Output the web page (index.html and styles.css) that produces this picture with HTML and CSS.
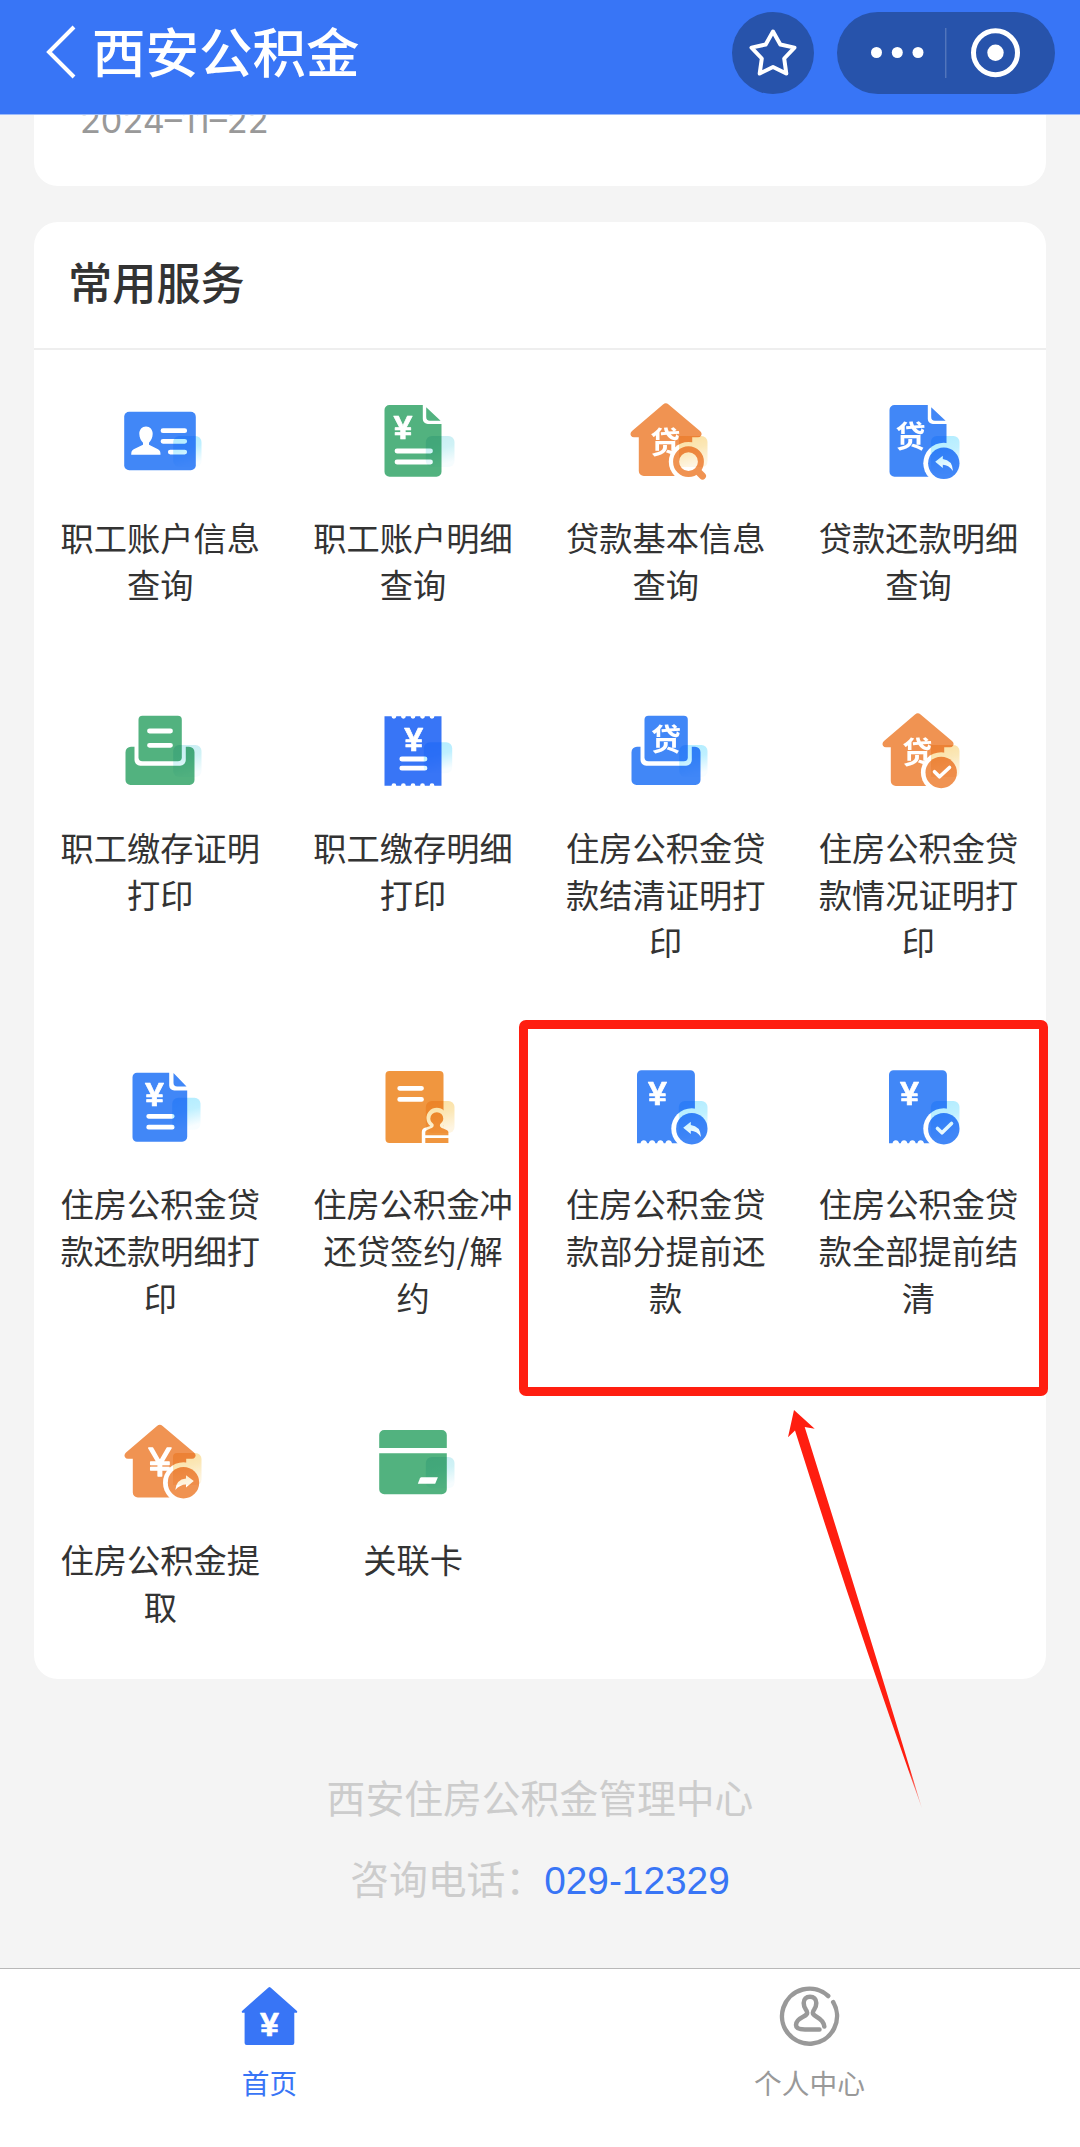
FILE: index.html
```html
<!DOCTYPE html>
<html lang="zh-CN">
<head>
    <meta charset="UTF-8">
    <meta name="viewport" content="width=device-width, initial-scale=1.0">
    <title>西安公积金</title>
    <link rel="stylesheet" href="styles.css">
</head>
<body>
    <!-- Shared icon parts -->
    <svg class="sprite" width="0" height="0">
        <defs>
            <linearGradient id="cyan" x1="0" y1="0" x2="0.25" y2="1">
                <stop offset="0" stop-color="#b0ecff"/>
                <stop offset="0.5" stop-color="#bff0ff"/>
                <stop offset="1" stop-color="#f8fdff"/>
            </linearGradient>
            <linearGradient id="mint" x1="0" y1="0" x2="0.25" y2="1">
                <stop offset="0" stop-color="#c8edf2"/>
                <stop offset="0.5" stop-color="#d0f2f6"/>
                <stop offset="1" stop-color="#f6fcfe"/>
            </linearGradient>
            <linearGradient id="sand" x1="0" y1="0" x2="0.25" y2="1">
                <stop offset="0" stop-color="#fbdf9f"/>
                <stop offset="0.5" stop-color="#fbe7b6"/>
                <stop offset="1" stop-color="#fef5e2"/>
            </linearGradient>
            <g id="page">
                <path d="M21.5 6H54.8V20a5 5 0 0 0 5 5H73.5V72.7a5 5 0 0 1-5 5H21.5a5 5 0 0 1-5-5V11a5 5 0 0 1 5-5z"/>
                <path d="M58.2 8.2 72.6 21.7H62a3.8 3.8 0 0 1-3.8-3.8z"/>
            </g>
            <path id="house" d="M42 5.4q2.8-2.2 5.6 0L79 32q2.600 2.500 1 4.700-1 1.600-3 1.600H71.200V72a5 5 0 0 1-5 5H22.800a5 5 0 0 1-5-5V38.300H13q-2 0-3-1.600-1.400-2.200 1-4.700z"/>
            <g id="tray">
                <rect x="23.500" y="6.700" width="43.300" height="45.600" rx="4"/>
                <path d="M19.500 37.700V51a5.700 5.700 0 0 0 5.700 5.700H65.100a5.700 5.700 0 0 0 5.700-5.700V37.700h3.200a5.500 5.500 0 0 1 5.500 5.500V71a5 5 0 0 1-5 5H15.500a5 5 0 0 1-5-5V43.200a5.500 5.500 0 0 1 5.500-5.500z"/>
            </g>
            <path id="stub" d="M20.500 5.300H69.400a4.500 4.500 0 0 1 4.500 4.500V78.300H51a3.400 4 0 0 0-6.600 0h-1.700a3.400 4 0 0 0-6.600 0h-1.700a3.400 4 0 0 0-6.600 0h-1.700a3.400 4 0 0 0-6.600 0H16V9.800a4.500 4.500 0 0 1 4.500-4.500z"/>
            <path id="back" d="M62.200 62.700 69.800 56.700V60Q79.300 61 80 72 75.500 65.800 69.800 65.800V69z"/>
        </defs>
    </svg>

    <!-- Navbar -->
    <header class="navbar">
        <svg class="back" viewBox="0 0 32 54" width="32" height="54"><path d="M29 2 4 27 29 52"/></svg>
        <h1 class="brand">西安公积金</h1>
        <div class="round-btn">
            <svg viewBox="0 0 82 82" width="82" height="82"><path class="star" d="M41 19.500 48.300 32.500 62.500 35.600 52.200 46.500 54.300 61.500 41 55 27.700 61.500 29.800 46.500 19.500 35.600 33.700 32.500z"/></svg>
        </div>
        <div class="capsule">
            <svg viewBox="0 0 218 82" width="218" height="82">
                <circle cx="39.500" cy="40.500" r="5.500"/>
                <circle cx="60.300" cy="40.500" r="5.500"/>
                <circle cx="81" cy="40.500" r="5.500"/>
                <path class="sep" d="M108.800 16V66"/>
                <circle class="ring" cx="158.500" cy="40.700" r="22"/>
                <circle cx="158.500" cy="40.700" r="8.200"/>
            </svg>
        </div>
    </header>

    <main class="content">
        <section class="card notice">
            <p class="date">2024–11–22</p>
        </section>

        <section class="card services">
            <h2 class="card-title">常用服务</h2>
            <div class="grid">
                <a class="item">
                    <svg class="icon blue" viewBox="0 0 90 84">
                        <rect x="9.200" y="12.700" width="71.600" height="58.600" rx="5"/>
                        <path class="white" d="M31 27.500c4 0 6.700 3.200 6.700 7.300 0 4-1.800 7-3.700 9v2l9 4.400c2 1.200 2.500 2.300 2.500 5.500H16.200c0-3.200.500-4.300 2.500-5.500l9.300-4.400v-2c-2-2-3.700-5-3.700-9 0-4.100 2.700-7.300 6.700-7.300z"/>
                        <path class="line" d="M48 31.700H69.700M48 42.300H69.700M55.300 53.100H69.700"/>
                        <rect class="shade" x="58.200" y="37" width="28.300" height="31" rx="6" fill="url(#cyan)"/>
                    </svg>
                    <span>职工账户信息查询</span>
                </a>
                <a class="item">
                    <svg class="icon green" viewBox="0 0 90 84">
                        <use href="#page"/>
                        <text class="yen" x="34.900" y="39.600">¥</text>
                        <path class="line" d="M29 52H62.500M29 63H62.500"/>
                        <rect class="shade" x="57.800" y="37" width="28.700" height="31" rx="6" fill="url(#mint)"/>
                    </svg>
                    <span>职工账户明细查询</span>
                </a>
                <a class="item">
                    <svg class="icon orange" viewBox="0 0 90 84">
                        <use href="#house"/>
                        <text class="loan" x="44.300" y="53.500">贷</text>
                        <circle class="white" cx="67.500" cy="62.700" r="19.700"/>
                        <circle class="lens" cx="67.500" cy="62.700" r="12.400"/>
                        <path class="handle" d="M78 73.500 81.500 77"/>
                        <path class="shade" d="M58 37H80.500a6 6 0 0 1 6 6V62q0 6-6 6H58z" fill="url(#sand)"/>
                    </svg>
                    <span>贷款基本信息查询</span>
                </a>
                <a class="item">
                    <svg class="icon blue" viewBox="0 0 90 84">
                        <use href="#page"/>
                        <text class="loan" x="37.600" y="47.500">贷</text>
                        <circle class="white" cx="70.800" cy="64.300" r="20.500"/>
                        <circle cx="70.800" cy="64.300" r="15.700"/>
                        <use class="white" href="#back"/>
                        <rect class="shade" x="57.800" y="37" width="28.700" height="38" rx="6" fill="url(#cyan)"/>
                    </svg>
                    <span>贷款还款明细查询</span>
                </a>

                <a class="item">
                    <svg class="icon green" viewBox="0 0 90 84">
                        <use href="#tray"/>
                        <path class="line" d="M34.500 22H55.500M34.500 36.300H55.500"/>
                        <rect class="shade" x="58.200" y="36" width="28.300" height="32" rx="6" fill="url(#mint)"/>
                    </svg>
                    <span>职工缴存证明打印</span>
                </a>
                <a class="item">
                    <svg class="icon royal" viewBox="0 0 90 84">
                        <path d="M16.500 7.300h7a2.400 2.400 0 0 0 4.800 0h4.700a2.400 2.400 0 0 0 4.800 0h4.800a2.400 2.400 0 0 0 4.800 0h4.700a2.400 2.400 0 0 0 4.800 0h4.700a2.400 2.400 0 0 0 4.800 0h7.100V76.700h-7.100a2.400 2.400 0 0 0-4.800 0h-4.700a2.400 2.400 0 0 0-4.800 0h-4.700a2.400 2.400 0 0 0-4.800 0h-4.800a2.400 2.400 0 0 0-4.800 0h-4.700a2.400 2.400 0 0 0-4.800 0h-7z"/>
                        <text class="yen" x="45.800" y="42">¥</text>
                        <path class="line" d="M33.800 50H57M33.800 59.200H57"/>
                        <rect class="shade" x="55.800" y="33.300" width="28.400" height="31" rx="6" fill="url(#cyan)"/>
                    </svg>
                    <span>职工缴存明细打印</span>
                </a>
                <a class="item">
                    <svg class="icon blue" viewBox="0 0 90 84">
                        <use href="#tray"/>
                        <text class="loan" x="44.900" y="40.800">贷</text>
                        <rect class="shade" x="58.200" y="36" width="28.300" height="32" rx="6" fill="url(#cyan)"/>
                    </svg>
                    <span>住房公积金贷款结清证明打印</span>
                </a>
                <a class="item">
                    <svg class="icon orange" viewBox="0 0 90 84">
                        <use href="#house"/>
                        <text class="loan" x="44.300" y="53.500">贷</text>
                        <circle class="white" cx="68.200" cy="63.500" r="20.300"/>
                        <circle cx="68.200" cy="63.500" r="15.700"/>
                        <path class="shade" d="M58 36H80.500a6 6 0 0 1 6 6V62q0 6-6 6H58z" fill="url(#sand)"/>
                        <path class="tick" d="M61.500 62.700 66.500 67.800 76.500 58.500"/>
                    </svg>
                    <span>住房公积金贷款情况证明打印</span>
                </a>

                <a class="item">
                    <svg class="icon blue" viewBox="0 0 90 84">
                        <path d="M22 7.700H54.200V20.500a5 5 0 0 0 5 5H72.200V71.700a5 5 0 0 1-5 5H22a4.500 4.500 0 0 1-4.500-4.500V12.200a4.500 4.500 0 0 1 4.500-4.500z"/>
                        <path d="M58.500 8 71.500 21.500H62.300a3.800 3.800 0 0 1-3.800-3.800z"/>
                        <text class="yen" x="39.500" y="41">¥</text>
                        <path class="line" d="M33.700 51.300H57.200M33.700 62.200H57.200"/>
                        <rect class="shade" x="57.200" y="32.700" width="28.300" height="32" rx="6" fill="url(#cyan)"/>
                    </svg>
                    <span>住房公积金贷款还款明细打印</span>
                </a>
                <a class="item">
                    <svg class="icon amber" viewBox="0 0 90 84">
                        <rect x="17.500" y="6" width="58" height="72" rx="4"/>
                        <path class="line" d="M31.700 23.300H53.500M31.700 34.400H53.500"/>
                        <path class="white" d="M53.800 78.500V67q0-4 4-4.500l4.500-1.500a10.300 10.300 0 1 1 13 0l5 3V78.500z"/>
                        <path d="M68.800 47.200a6.500 6.500 0 0 1 6.500 6.500c0 2.600-2 4-3.200 5.500-.8 2.500 1 3.600 3.200 4.400l3.300 1.400c1.200.500 1.800 1.200 1.800 2.500v2.800H57.300v-2.800c0-1.300.6-2 1.800-2.500l3.300-1.400c2.200-.8 3.900-2 3.100-4.400-1.200-1.500-3.200-2.900-3.200-5.500a6.500 6.500 0 0 1 6.500-6.500zM57.300 73H80.400v5H57.300z"/>
                        <rect class="shade" x="57.800" y="36" width="28.700" height="32" rx="6" fill="url(#sand)"/>
                    </svg>
                    <span>住房公积金冲还贷签约/解约</span>
                </a>
                <a class="item">
                    <svg class="icon blue" viewBox="0 0 90 84">
                        <use href="#stub"/>
                        <text class="yen" x="36.400" y="40">¥</text>
                        <circle class="white" cx="70.800" cy="63.700" r="20.500"/>
                        <circle cx="70.800" cy="63.700" r="15.700"/>
                        <use class="white" href="#back"/>
                        <rect class="shade" x="57.800" y="36" width="28.700" height="38" rx="6" fill="url(#cyan)"/>
                    </svg>
                    <span>住房公积金贷款部分提前还款</span>
                </a>
                <a class="item">
                    <svg class="icon blue" viewBox="0 0 90 84">
                        <use href="#stub"/>
                        <text class="yen" x="36.400" y="40">¥</text>
                        <circle class="white" cx="70.800" cy="63.700" r="20.500"/>
                        <circle cx="70.800" cy="63.700" r="15.700"/>
                        <path class="tick" d="M64.500 63.500 69 67.800 78.500 58.500"/>
                        <rect class="shade" x="57.800" y="36" width="28.700" height="38" rx="6" fill="url(#cyan)"/>
                    </svg>
                    <span>住房公积金贷款全部提前结清</span>
                </a>

                <a class="item">
                    <svg class="icon orange" viewBox="0 0 90 84">
                        <use href="#house" y="-0.500"/>
                        <text class="yen yen-lg" x="44.900" y="54.500">¥</text>
                        <circle class="white" cx="68.500" cy="61.700" r="20.500"/>
                        <circle cx="68.500" cy="61.700" r="15.700"/>
                        <path class="white" d="M78.800 60 71 54.300V57.500Q61 58.500 60.300 69 65 63.500 71 63.500V66.500z"/>
                        <path class="shade" d="M58 38.300V36q0-4 4-4H80.500a6 6 0 0 1 6 6V58q0 6-6 6H58z" fill="url(#sand)"/>
                    </svg>
                    <span>住房公积金提取</span>
                </a>
                <a class="item">
                    <svg class="icon green" viewBox="0 0 90 84">
                        <path d="M16.200 9H73.800a5 5 0 0 1 5 5V27H11.200V14a5 5 0 0 1 5-5zM11.200 32.300H78.800V68.300a5 5 0 0 1-5 5H16.200a5 5 0 0 1-5-5z"/>
                        <rect class="shade" x="57.800" y="36" width="28.700" height="31.300" rx="6" fill="url(#mint)"/>
                        <path class="white" d="M53.500 56.300H69.900L67.200 62.800H49.800L52 57.300Q52.400 56.300 53.500 56.300z"/>
                    </svg>
                    <span>关联卡</span>
                </a>
            </div>

            <!-- Highlighted entries -->
            <div class="highlight"></div>
            <svg class="pointer" viewBox="0 0 140 402" width="140" height="402">
                <defs>
                    <linearGradient id="tail" gradientUnits="userSpaceOnUse" x1="0" y1="0" x2="0" y2="402">
                        <stop offset="0.9" stop-color="#ff1e10"/>
                        <stop offset="1" stop-color="#ff1e10" stop-opacity="0.2"/>
                    </linearGradient>
                </defs>
                <path fill="url(#tail)" d="M8 2 28.700 20.700 18.700 19Q76 202 136 400.500 70 216 9 22.600L2 29.300z"/>
            </svg>
        </section>

        <footer class="footer">
            <p>西安住房公积金管理中心</p>
            <p>咨询电话：<a class="phone">029-12329</a></p>
        </footer>
    </main>

    <!-- Tab bar -->
    <nav class="tabbar">
        <a class="tab active">
            <svg viewBox="0 0 64 64" width="64" height="64">
                <path d="M32.500 2.500q-1-1-2 0L4 26q-.8 1.800 1 1.800h1.600V58q0 2 2 2H54.300q2 0 2-2V27.800H58q1.800 0 1-1.800z"/>
                <text class="yen" x="31.500" y="50.500">¥</text>
            </svg>
            <span>首页</span>
        </a>
        <a class="tab">
            <svg viewBox="0 0 64 64" width="64" height="64">
                <path class="outline" d="M50.200 11A27.500 27.500 0 1 0 55.200 17.200M41.500 44.500H27c-6 0-9-1-9-4.500 0-7 8-7.500 10.500-10.500 1.500-2 .500-3.500-.800-5.200-1.500-2.300-2-4.300-2-6.300 0-4 2.500-6.200 6.300-6.200s6.300 2.200 6.300 6.200c0 2-.500 4-2 6.300-1.300 1.700-2.300 3.200-.800 5.200 2.500 3 10 3.800 10.800 12"/>
            </svg>
            <span>个人中心</span>
        </a>
    </nav>
</body>
</html>
```
FILE: styles.css
```css
* {
    margin: 0;
    padding: 0;
    box-sizing: border-box;
}

body {
    width: 1080px;
    height: 2147px;
    display: flex;
    flex-direction: column;
    background: #f4f4f4;
    color: #333333;
    font-family: 'Noto Sans CJK SC', sans-serif;
    overflow: hidden;
}

.sprite {
    display: block;
    height: 0;
}

/* Navbar */
.navbar {
    height: 115px;
    flex: none;
    display: flex;
    align-items: flex-start;
    padding: 12px 25px 0 45px;
    background: #3875f6;
    border-bottom: 1px solid #9bbafa;
}

.back {
    margin-top: 13px;
    fill: none;
    stroke: #ffffff;
    stroke-width: 4;
}

.brand {
    flex: 1;
    margin-left: 15px;
    font-size: 53.5px;
    font-weight: 500;
    line-height: 75px;
    color: #ffffff;
}

.round-btn,
.capsule {
    height: 82px;
    border-radius: 41px;
    background: #2753ab;
    fill: #ffffff;
}

.round-btn {
    width: 82px;
    margin-right: 23px;
}

.capsule {
    width: 218px;
}

.star {
    fill: none;
    stroke: #ffffff;
    stroke-width: 4;
    stroke-linejoin: round;
}

.sep {
    stroke: #6585c4;
    stroke-width: 1;
}

.ring {
    fill: none;
    stroke: #ffffff;
    stroke-width: 5;
}

/* Cards */
.content {
    flex: 1;
    padding: 0 34px;
}

.card {
    background: #ffffff;
    border-radius: 24px;
}

.notice {
    height: 71px;
    padding-left: 46px;
    border-radius: 0 0 24px 24px;
    overflow: hidden;
}

.date {
    margin-top: -14px;
    font-family: 'Inter', sans-serif;
    font-size: 34.2px;
    font-weight: 400;
    line-height: 40px;
    color: #999999;
}

.services {
    position: relative;
    height: 1457px;
    margin-top: 36px;
}

.card-title {
    height: 128px;
    padding-left: 34px;
    border-bottom: 2px solid #eeeeee;
    font-size: 44.2px;
    font-weight: 500;
    line-height: 119px;
}

/* Service grid */
.grid {
    display: grid;
    grid-template-columns: repeat(4, 252.7px);
    grid-template-rows: 310px 356px 356px 307px;
}

.item {
    display: flex;
    flex-direction: column;
    align-items: center;
    padding: 49px 24px 0;
    font-size: 33.25px;
    line-height: 47px;
    text-align: center;
}

.icon {
    width: 90px;
    height: 84px;
    flex: none;
    margin-bottom: 30px;
    isolation: isolate;
}

.blue { fill: #4187f7; }
.royal { fill: #3875f6; }
.green { fill: #52b27f; }
.orange { fill: #f09352; }
.amber { fill: #f0963f; }
.white { fill: #ffffff; }

.line {
    stroke: #ffffff;
    stroke-width: 4.8;
    stroke-linecap: round;
}

.tick {
    fill: none;
    stroke: #ffffff;
    stroke-width: 3.6;
    stroke-linecap: round;
    stroke-linejoin: round;
}

.shade {
    mix-blend-mode: multiply;
}

.lens {
    fill: none;
    stroke: #f09352;
    stroke-width: 6;
}

.handle {
    stroke: #f09352;
    stroke-width: 7;
    stroke-linecap: round;
}

.yen {
    font-family: 'Liberation Sans', sans-serif;
    font-size: 34px;
    font-weight: 700;
    text-anchor: middle;
    fill: #ffffff;
    stroke: #ffffff;
    stroke-width: 0.6;
    stroke-linejoin: round;
}

.yen-lg {
    font-size: 40px;
    font-weight: 400;
    stroke-width: 1.4;
}

.loan {
    font-size: 30px;
    font-weight: 700;
    text-anchor: middle;
    fill: #ffffff;
}

/* Highlight frame and arrow */
.highlight {
    position: absolute;
    left: 485px;
    top: 798px;
    width: 529px;
    height: 376px;
    border: 9px solid #ff1e10;
    border-radius: 7px;
}

.pointer {
    position: absolute;
    left: 752px;
    top: 1186px;
}

/* Footer */
.footer {
    padding-top: 77px;
    font-size: 38.8px;
    line-height: 81px;
    text-align: center;
    color: #cccccc;
}

.phone {
    font-family: 'Liberation Sans', sans-serif;
    color: #3875f6;
}

/* Tab bar */
.tabbar {
    flex: none;
    height: 179px;
    display: flex;
    background: #ffffff;
    border-top: 1px solid #b8b8b8;
}

.tab {
    flex: 1;
    display: flex;
    flex-direction: column;
    align-items: center;
    padding: 16px 1px 0 0;
    font-size: 27.7px;
    line-height: 40px;
    color: #999999;
}

.tab svg {
    margin-bottom: 13px;
}

.tab.active {
    color: #3875f6;
    fill: #3875f6;
}

.outline {
    fill: none;
    stroke: #999999;
    stroke-width: 4.5;
    stroke-linecap: round;
}
```
